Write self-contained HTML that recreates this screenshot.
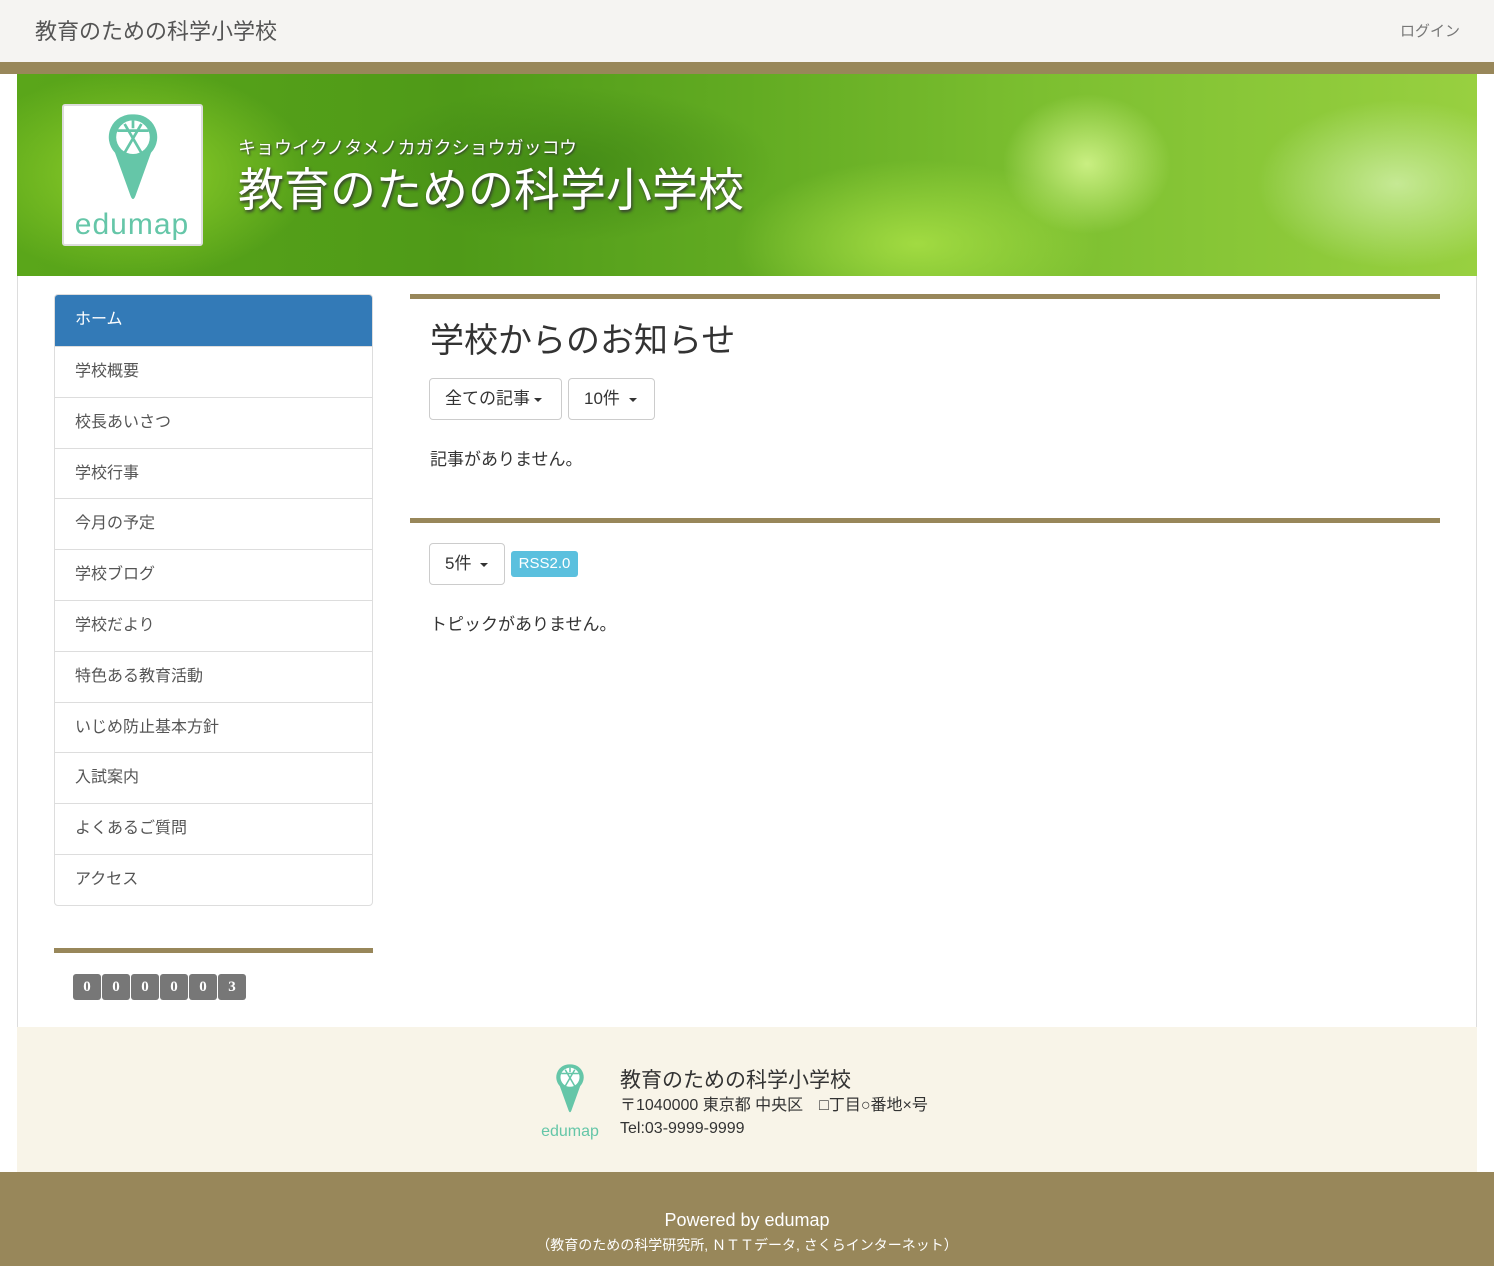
<!DOCTYPE html>
<html><head><meta charset="utf-8"><style>
*{box-sizing:border-box;margin:0;padding:0}
body{width:1494px;height:1266px;background:#fff;font-family:"Liberation Sans","Noto Sans CJK JP",sans-serif;color:#333;position:relative;overflow:hidden}
.top{position:absolute;left:0;top:0;width:1494px;height:62px;background:#f5f4f2}
.top .t{position:absolute;left:35px;top:14px;font-size:22px;color:#555}
.top .l{position:absolute;right:34px;top:20px;font-size:15px;color:#777}
.bar{position:absolute;left:0;top:62px;width:1494px;height:12px;background:#98875a}
.wrap{position:absolute;left:17px;top:74px;width:1460px;height:1098px;background:#fff;border-left:1px solid #ddd;border-right:1px solid #ddd}
.banner{position:absolute;left:17px;top:74px;width:1460px;height:202px;overflow:hidden;
background:radial-gradient(ellipse 120px 100px at 1070px 90px,rgba(220,250,150,.8),transparent 70%),
radial-gradient(ellipse 200px 120px at 1380px 110px,rgba(210,240,170,.8),transparent 70%),
radial-gradient(ellipse 260px 120px at 900px 170px,rgba(170,225,70,.85),transparent 70%),
radial-gradient(ellipse 300px 110px at 550px 90px,rgba(60,130,20,.7),transparent 70%),
radial-gradient(ellipse 250px 150px at 120px 100px,#8fcf2a,transparent 70%),
linear-gradient(90deg,#5aa61a,#4f9a18 30%,#62ab22 50%,#7cbf30 70%,#98d040)}
.logo{position:absolute;left:62px;top:104px;width:141px;height:142px;background:#fff;border:2px solid #ddd;border-radius:3px}
.kana{position:absolute;left:238px;top:134px;font-size:18px;color:#fff;text-shadow:1px 1px 2px #333}
.name{position:absolute;left:238px;top:154px;font-size:46px;color:#fff;text-shadow:1px 2px 3px #333}
.nav{position:absolute;left:54px;top:294px;width:319px;border:1px solid #ddd;border-radius:4px;overflow:hidden}
.nav div{height:50.8px;line-height:50px;padding-left:20px;font-size:16px;color:#555;border-top:1px solid #ddd}
.nav div.a{background:#337ab7;color:#fff;border-top:none;height:51px}
.sbar{position:absolute;left:54px;top:948px;width:319px;height:5px;background:#98875a}
.cnt{position:absolute;left:73px;top:974px;display:flex}
.cnt span{width:28px;height:26px;margin-right:1px;background:#777;border-radius:3px;color:#fff;font-family:"Liberation Serif",serif;font-weight:bold;font-size:15px;text-align:center;line-height:26px}
.hr{position:absolute;left:410px;width:1030px;height:5px;background:#98875a}
h1{position:absolute;left:430px;top:313px;font-size:34px;font-weight:normal;color:#333}
.btn{position:absolute;height:42px;border:1px solid #ccc;border-radius:4px;font-size:17px;line-height:40px;padding:0 15px;color:#333;background:#fff}
.car{display:inline-block;width:0;height:0;border-left:4px solid transparent;border-right:4px solid transparent;border-top:4px solid #333;vertical-align:middle;margin-left:4px}
.txt{position:absolute;left:430px;font-size:17px}
.rss{position:absolute;left:511px;top:551px;width:67px;height:26px;background:#5bc0de;color:#fff;border-radius:3px;font-size:15px;text-align:center;line-height:26px}
.foot{position:absolute;left:17px;top:1027px;width:1460px;height:145px;background:#f8f4e8}
.fn{position:absolute;left:620px;top:1064px;font-size:21px}
.fa{position:absolute;left:620px;top:1094px;font-size:16px;line-height:23px}
.bot{position:absolute;left:0;top:1172px;width:1494px;height:94px;background:#98875a;color:#fff;text-align:center}
</style></head><body>
<svg width="0" height="0" style="position:absolute"><defs>
<g id="pin"><path d="M50 4 A38 38 0 0 1 80 68 L54 140 Q50 150 46 140 L20 68 A38 38 0 0 1 50 4 Z" fill="#65c6a8"/>
<circle cx="50" cy="42" r="28" fill="#fff"/>
<path d="M50 14 L50 27 M24 31 L76 31 M36 20 L64 68 M64 20 L36 68" stroke="#65c6a8" stroke-width="4.5" fill="none"/></g>
</defs></svg>
<div class="top"><div class="t">教育のための科学小学校</div><div class="l">ログイン</div></div>
<div class="bar"></div>
<div class="wrap"></div>
<div class="banner"></div>
<div class="logo">
<svg width="137" height="138" viewBox="0 0 137 138"><g transform="translate(39,6) scale(0.6)"><use href="#pin"/></g>
<text x="68" y="128" text-anchor="middle" font-family="Liberation Sans,sans-serif" font-size="30" fill="#65c6a8" letter-spacing="1">edumap</text></svg>
</div>
<div class="kana">キョウイクノタメノカガクショウガッコウ</div>
<div class="name">教育のための科学小学校</div>
<div class="nav">
<div class="a">ホーム</div><div>学校概要</div><div>校長あいさつ</div><div>学校行事</div><div>今月の予定</div><div>学校ブログ</div><div>学校だより</div><div>特色ある教育活動</div><div>いじめ防止基本方針</div><div>入試案内</div><div>よくあるご質問</div><div>アクセス</div>
</div>
<div class="sbar"></div>
<div class="cnt"><span>0</span><span>0</span><span>0</span><span>0</span><span>0</span><span>3</span></div>
<div class="hr" style="top:294px"></div>
<h1>学校からのお知らせ</h1>
<div class="btn" style="left:429px;top:378px;width:133px">全ての記事<span class="car"></span></div>
<div class="btn" style="left:568px;top:378px;width:87px">10件 <span class="car"></span></div>
<div class="txt" style="top:445px">記事がありません。</div>
<div class="hr" style="top:518px"></div>
<div class="btn" style="left:429px;top:543px;width:76px">5件 <span class="car"></span></div>
<div class="rss">RSS2.0</div>
<div class="txt" style="top:610px">トピックがありません。</div>
<div class="foot"></div>
<svg style="position:absolute;left:534px;top:1063px" width="72" height="80" viewBox="0 0 72 80"><g transform="translate(19,0) scale(0.34)"><use href="#pin"/></g>
<text x="36" y="73" text-anchor="middle" font-family="Liberation Sans,sans-serif" font-size="16" fill="#65c6a8">edumap</text></svg>
<div class="fn">教育のための科学小学校</div>
<div class="fa">〒1040000 東京都 中央区　□丁目○番地×号<br>Tel:03-9999-9999</div>
<div class="bot"><div style="margin-top:38px;font-size:18px">Powered by edumap</div><div style="margin-top:4px;font-size:14px">（教育のための科学研究所, ＮＴＴデータ, さくらインターネット）</div></div>
</body></html>
